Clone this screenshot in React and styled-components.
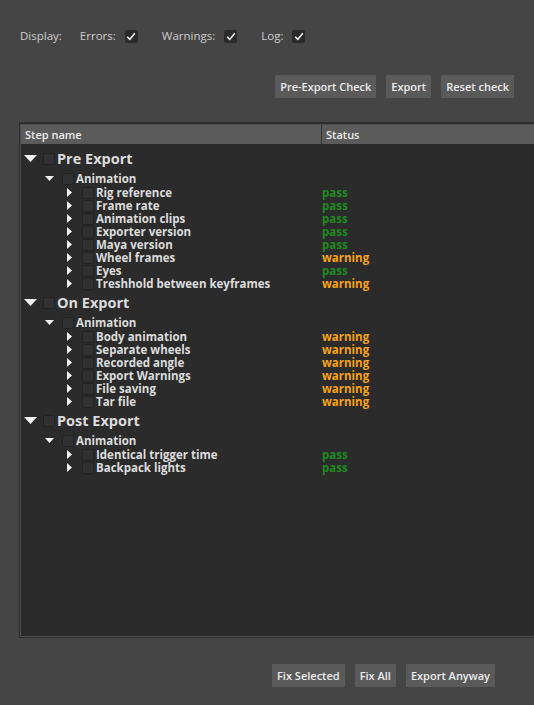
import styled, { createGlobalStyle } from "styled-components"

const GlobalStyle = createGlobalStyle`
    html, body {
        margin: 0;
        padding: 0;
        background: #454545;
    }
    body {
        font-family: "Open Sans", "DejaVu Sans", sans-serif;
        overflow: hidden;
    }
`

const Page = styled.div`
    width: 534px;
    height: 705px;
    display: flex;
    flex-direction: column;
    overflow: hidden;
`

const DisplayBar = styled.div`
    display: flex;
    flex-direction: row;
    align-items: center;
    height: 14px;
    padding-top: 29px;
    padding-left: 20px;
`

const Label = styled.span`
    color: #cdcdcd;
    font-size: 11.5px;
    line-height: 14px;
    margin-right: ${(props) => props.gap || "9px"};
`

const CheckBox = styled.span`
    width: 13px;
    height: 13px;
    border-radius: 2px;
    background: #2a2a2a;
    display: flex;
    align-items: center;
    justify-content: center;
    margin-right: ${(props) => props.gap || "24px"};
`

const ActionBar = styled.div`
    display: flex;
    flex-direction: row;
    justify-content: flex-end;
    gap: 10px;
    margin-top: ${(props) => props.top || "32px"};
    padding-right: ${(props) => props.right || "20px"};
`

const Button = styled.button`
    height: 23px;
    padding: 0 5px;
    border: none;
    border-radius: 1px;
    background: #5a5a5a;
    color: #ececec;
    font-family: inherit;
    font-size: 11px;
    font-weight: 600;
    outline: none;
`

const Table = styled.div`
    margin-top: 24px;
    margin-left: 19px;
    width: 540px;
    height: 511px;
    display: flex;
    flex-direction: column;
    border: 1px solid #2e2e2e;
    border-top-width: 2px;
    box-shadow: inset 0 0 0 1px #4d4d4d;
    padding: 1px 0 1px 1px;
`

const Header = styled.div`
    display: grid;
    grid-template-columns: 301px 1fr;
    height: 19px;
    background: #5b5b5b;
    flex-shrink: 0;
`

const HeaderCell = styled.div`
    display: flex;
    align-items: center;
    padding-left: 4px;
    color: #ebebeb;
    font-size: 11px;
    font-weight: 600;
    line-height: 19px;
    border-right: ${(props) => (props.divider ? "1px solid #343434" : "none")};
`

const Body = styled.div`
    flex: 1;
    background: #2b2b2b;
    padding-top: 2px;
`

const Row = styled.div`
    display: grid;
    grid-template-columns: 301px 1fr;
    height: ${(props) => props.h}px;
    line-height: ${(props) => props.h}px;
    align-items: center;
`

const NameCell = styled.div`
    display: flex;
    flex-direction: row;
    align-items: center;
    height: 100%;
    padding-left: ${(props) => props.indent}px;
`

const ArrowSlot = styled.span`
    width: 19px;
    height: 100%;
    display: flex;
    align-items: center;
    padding-left: ${(props) => props.shift}px;
    box-sizing: border-box;
    flex-shrink: 0;
`

const Box = styled.span`
    display: block;
    width: 12px;
    height: 12px;
    box-sizing: border-box;
    background: #313131;
    border: 1px solid #232323;
    border-radius: 2px;
    margin-right: 2px;
    flex-shrink: 0;
`

const Name = styled.span`
    color: #dcdcdc;
    font-weight: 700;
    font-size: ${(props) => props.size}px;
    white-space: nowrap;
`

const Status = styled.span`
    color: ${(props) => (props.kind === "pass" ? "#1f8a1f" : "#f7a21b")};
    font-weight: 700;
    font-size: 11.5px;
`

const levels = [
    { h: 25, indent: 3, size: 14.5, shift: 0 },
    { h: 15, indent: 22, size: 11.5, shift: 2 },
    { h: 13, indent: 42, size: 11.5, shift: 4 },
]

const steps = [
    {
        name: "Pre Export",
        items: [
            ["Rig reference", "pass"],
            ["Frame rate", "pass"],
            ["Animation clips", "pass"],
            ["Exporter version", "pass"],
            ["Maya version", "pass"],
            ["Wheel frames", "warning"],
            ["Eyes", "pass"],
            ["Treshhold between keyframes", "warning"],
        ],
    },
    {
        name: "On Export",
        items: [
            ["Body animation", "warning"],
            ["Separate wheels", "warning"],
            ["Recorded angle", "warning"],
            ["Export Warnings", "warning"],
            ["File saving", "warning"],
            ["Tar file", "warning"],
        ],
    },
    {
        name: "Post Export",
        items: [
            ["Identical trigger time", "pass"],
            ["Backpack lights", "pass"],
        ],
    },
]

function Check() {
    return (
        <svg width="10" height="9" viewBox="0 0 10 9">
            <path d="M1.2 4.8 L3.8 7.4 L8.8 1.2" fill="none" stroke="#f0f0f0" strokeWidth="1.6" />
        </svg>
    )
}

function Arrow({ level }) {
    if (level === 0) {
        return (
            <svg width="13" height="7" viewBox="0 0 13 7">
                <polygon points="0,0 13,0 6.5,7" fill="#f2f2f2" />
            </svg>
        )
    }
    if (level === 1) {
        return (
            <svg width="9" height="5" viewBox="0 0 9 5">
                <polygon points="0,0 9,0 4.5,5" fill="#f2f2f2" />
            </svg>
        )
    }
    return (
        <svg width="5" height="9" viewBox="0 0 5 9">
            <polygon points="0,0 5,4.5 0,9" fill="#f2f2f2" />
        </svg>
    )
}

function TreeRow({ level, label, status }) {
    const l = levels[level]
    return (
        <Row h={l.h}>
            <NameCell indent={l.indent}>
                <ArrowSlot shift={l.shift}>
                    <Arrow level={level} />
                </ArrowSlot>
                <Box />
                <Name size={l.size}>{label}</Name>
            </NameCell>
            {status && <Status kind={status}>{status}</Status>}
        </Row>
    )
}

export default function App() {
    return (
        <Page>
            <GlobalStyle />
            <DisplayBar>
                <Label gap="18px">Display:</Label>
                <Label>Errors:</Label>
                <CheckBox><Check /></CheckBox>
                <Label>Warnings:</Label>
                <CheckBox><Check /></CheckBox>
                <Label>Log:</Label>
                <CheckBox><Check /></CheckBox>
            </DisplayBar>
            <ActionBar>
                <Button>Pre-Export Check</Button>
                <Button>Export</Button>
                <Button>Reset check</Button>
            </ActionBar>
            <Table>
                <Header>
                    <HeaderCell divider>Step name</HeaderCell>
                    <HeaderCell>Status</HeaderCell>
                </Header>
                <Body>
                    {steps.map((step) => (
                        <div key={step.name}>
                            <TreeRow level={0} label={step.name} />
                            <TreeRow level={1} label="Animation" />
                            {step.items.map(([name, status]) => (
                                <TreeRow key={name} level={2} label={name} status={status} />
                            ))}
                        </div>
                    ))}
                </Body>
            </Table>
            <ActionBar top="26px" right="39px">
                <Button>Fix Selected</Button>
                <Button>Fix All</Button>
                <Button>Export Anyway</Button>
            </ActionBar>
        </Page>
    )
}
